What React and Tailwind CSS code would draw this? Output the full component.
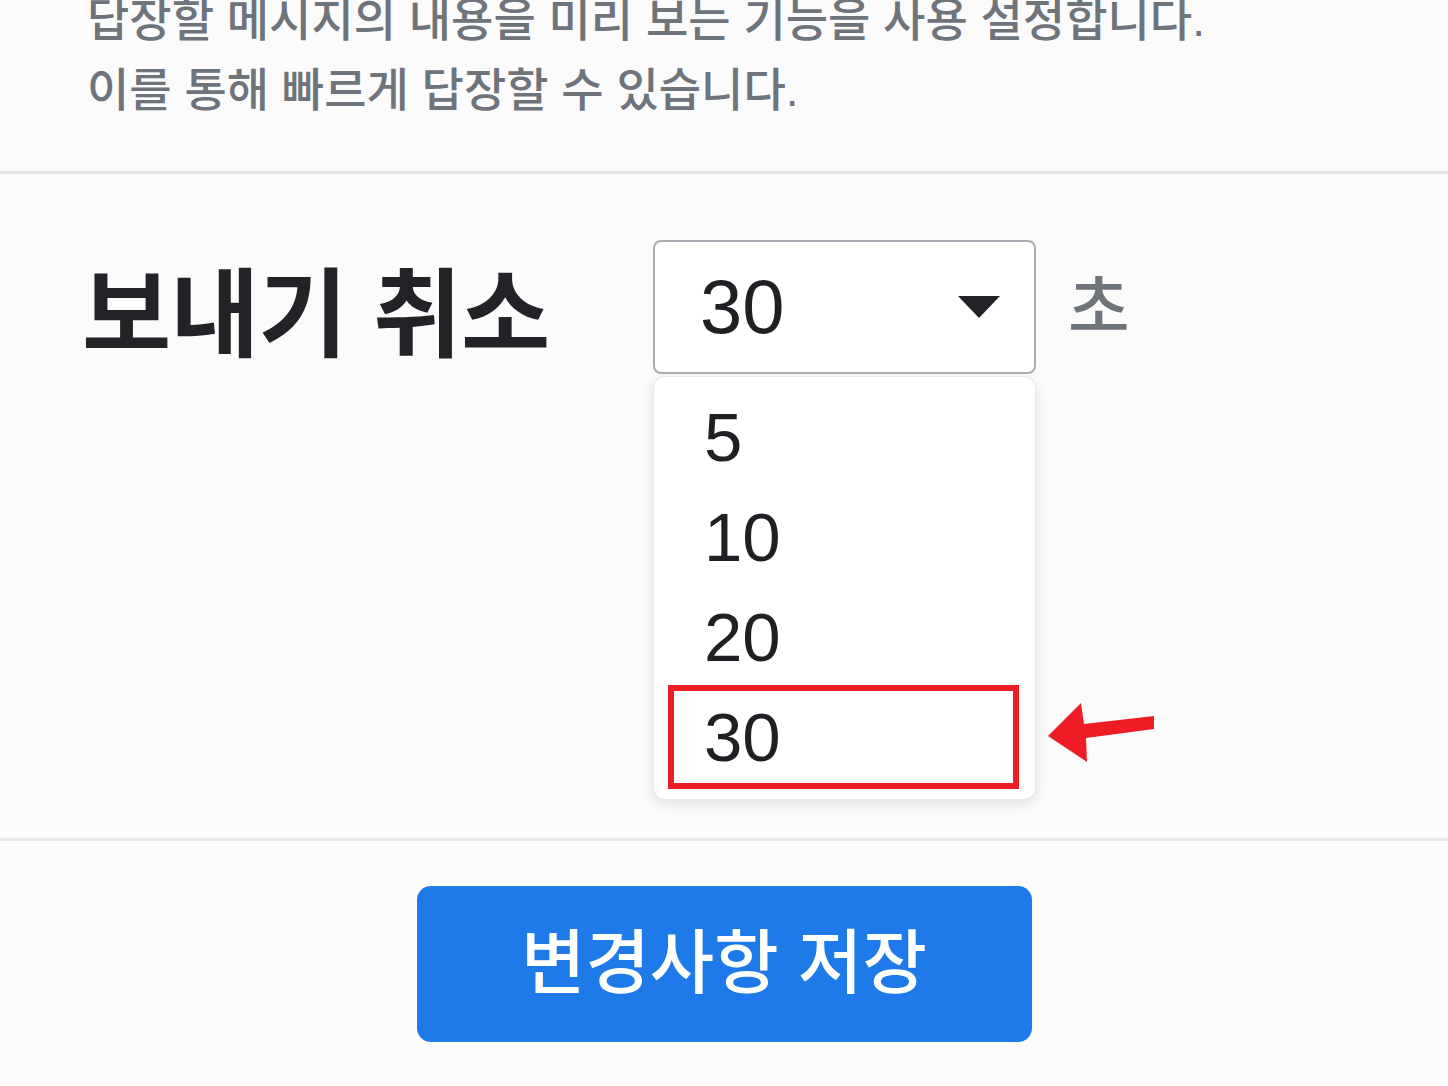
import { useState } from 'react';

const OPTIONS = ['5', '10', '20', '30'];

export default function App() {
    const [value] = useState('30');

    return (
        <div className="min-h-screen bg-[#fbfbfc] overflow-hidden" style={{ fontFamily: '"Liberation Sans", "Noto Sans CJK KR", sans-serif' }}>
            {/* Description */}
            <div className="mt-[-15px] pl-[87px] pb-[46px] text-[46px] leading-[70px] font-medium text-[#6f737a]">
                <p>답장할 메시지의 내용을 미리 보는 기능을 사용 설정합니다.</p>
                <p>이를 통해 빠르게 답장할 수 있습니다.</p>
            </div>

            <div className="h-[3px] bg-[#e6e7ea]"></div>

            {/* Undo send */}
            <div className="flex items-start pt-[66px] pb-[38px] pl-[82px]">
                <div className="w-[571px] h-[134px] pt-[16px] flex items-center">
                    <h2 className="text-[97px] font-bold text-[#222326] leading-none tracking-[-1px]">보내기 취소</h2>
                </div>

                <div className="flex flex-col">
                    <div className="flex items-center">
                        <div className="w-[383px] h-[134px] flex items-center justify-between pl-[45px] pr-[34px] bg-white border-2 border-[#a9adb3] rounded-[8px]">
                            <span className="text-[76px] leading-none text-[#1f2023]">{value}</span>
                            <svg width="42" height="22" viewBox="0 0 42 22">
                                <polygon points="0,0 42,0 21,22" fill="#222326" />
                            </svg>
                        </div>
                        <span className="ml-[32px] text-[67px] font-medium text-[#6f737a] leading-none">초</span>
                    </div>

                    {/* Open menu */}
                    <div className="mt-[2px] w-[383px] pt-[10px] pb-[12px] bg-white border border-[#e6e7ea] rounded-[12px] shadow-[0_4px_14px_rgba(0,0,0,0.10)]">
                        {OPTIONS.map((opt) => (
                            <div key={opt} className="relative h-[100px] flex items-center pl-[50px] text-[69px] text-[#1f2023]">
                                <span className="leading-none">{opt}</span>
                                {opt === value && (
                                    <>
                                        <div className="absolute left-[14px] right-[16px] top-[-2px] bottom-[-2px] border-[6px] border-[#ee1c25]"></div>
                                        <svg className="absolute left-[391px] top-[12px]" width="112" height="66" viewBox="0 0 112 66">
                                            <polygon points="3,37 36,4 39,25 109,17 109,30 41,39 42,63" fill="#ee1c25" />
                                        </svg>
                                    </>
                                )}
                            </div>
                        ))}
                    </div>
                </div>
            </div>

            <div className="h-[3px] bg-[#e6e7ea]"></div>

            {/* Save */}
            <div className="flex justify-center pt-[45px] pb-[40px]">
                <button className="w-[615px] h-[156px] rounded-[14px] bg-[#1f7ae9] text-white text-[70px] font-medium">
                    변경사항 저장
                </button>
            </div>
        </div>
    );
}
